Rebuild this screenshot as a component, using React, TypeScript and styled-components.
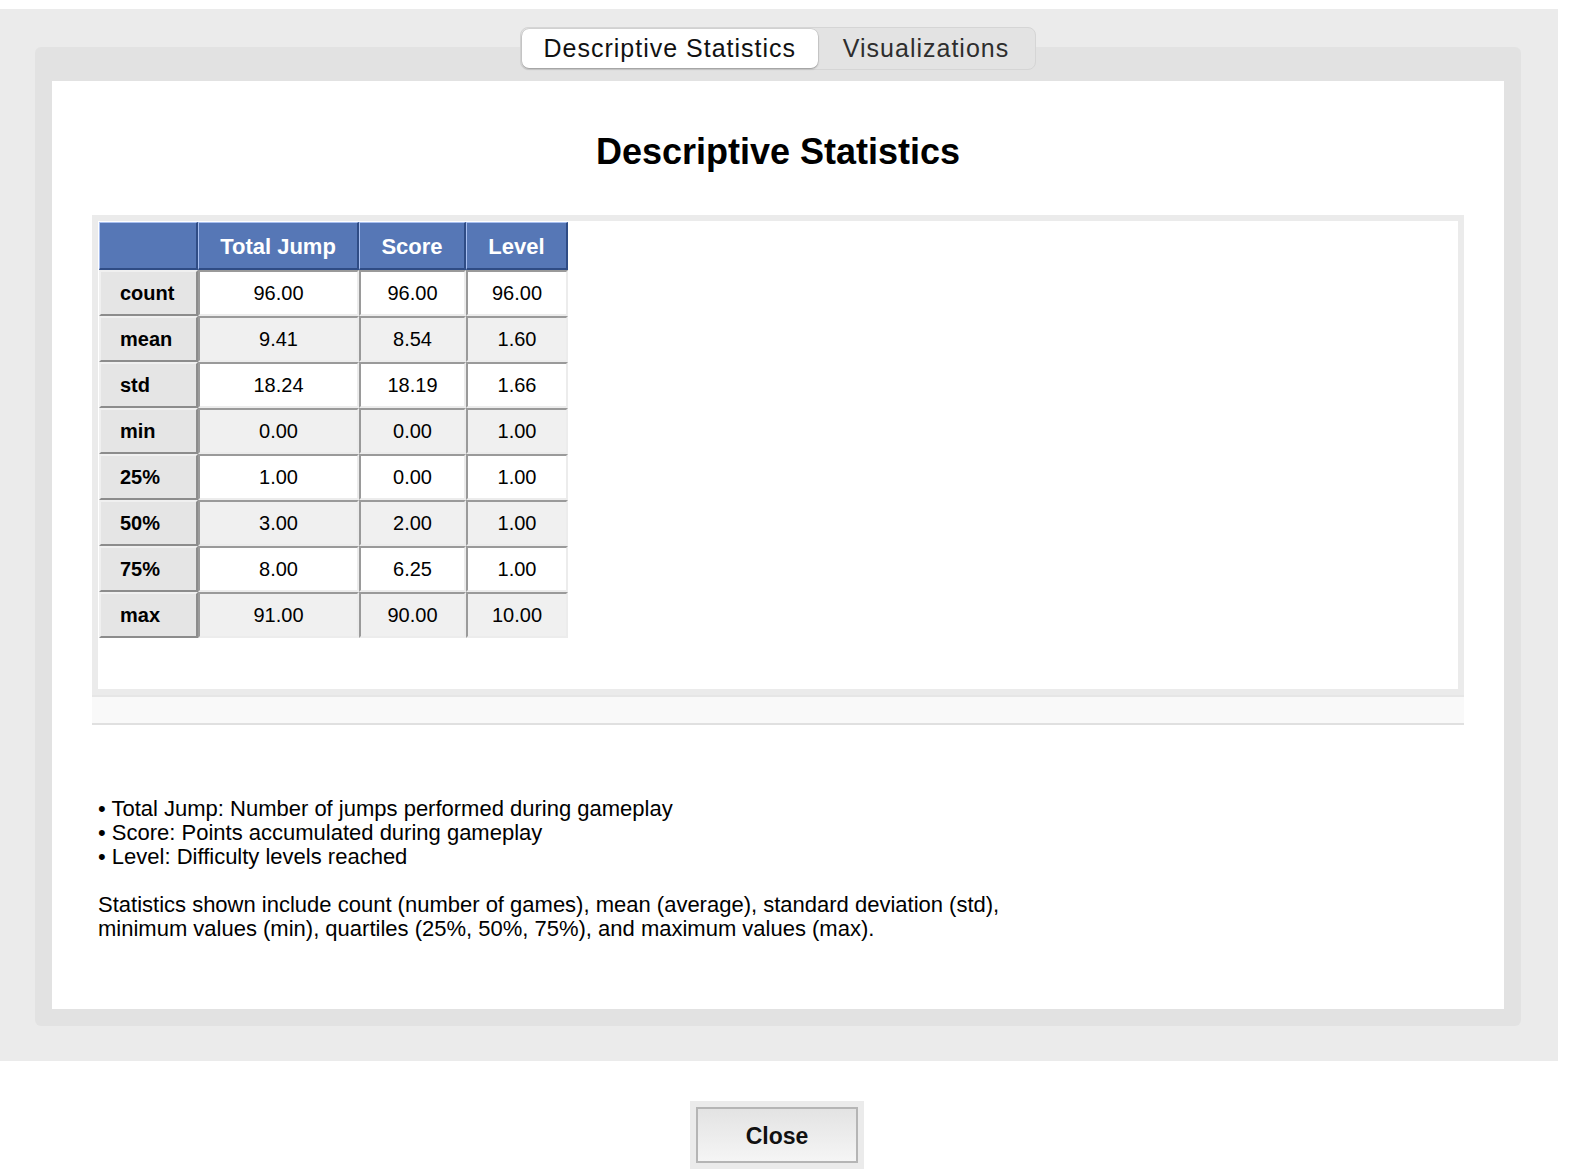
import styled, { createGlobalStyle } from "styled-components";

type Row = {
    label: string;
    values: string[];
}

const COLUMNS = ["Total Jump", "Score", "Level"];

const ROWS: Row[] = [
    { label: "count", values: ["96.00", "96.00", "96.00"] },
    { label: "mean", values: ["9.41", "8.54", "1.60"] },
    { label: "std", values: ["18.24", "18.19", "1.66"] },
    { label: "min", values: ["0.00", "0.00", "1.00"] },
    { label: "25%", values: ["1.00", "0.00", "1.00"] },
    { label: "50%", values: ["3.00", "2.00", "1.00"] },
    { label: "75%", values: ["8.00", "6.25", "1.00"] },
    { label: "max", values: ["91.00", "90.00", "10.00"] },
];

const NOTES = [
    "Total Jump: Number of jumps performed during gameplay",
    "Score: Points accumulated during gameplay",
    "Level: Difficulty levels reached",
];

export default function App() {
    return (
        <>
            <GlobalStyle />
            <Dialog>
                <TabBar>
                    <Tab active>Descriptive Statistics</Tab>
                    <Tab>Visualizations</Tab>
                </TabBar>
                <Pane>
                    <Content>
                        <Heading>Descriptive Statistics</Heading>
                        <Frame>
                            <StatsTable>
                                <colgroup>
                                    <col style={{ width: 99 }} />
                                    <col style={{ width: 161 }} />
                                    <col style={{ width: 107 }} />
                                    <col style={{ width: 102 }} />
                                </colgroup>
                                <thead>
                                    <HeadRow>
                                        <HeadCell />
                                        {COLUMNS.map((c) => (
                                            <HeadCell key={c}>{c}</HeadCell>
                                        ))}
                                    </HeadRow>
                                </thead>
                                <tbody>
                                    {ROWS.map((r, i) => (
                                        <BodyRow key={r.label}>
                                            <IndexCell>{r.label}</IndexCell>
                                            {r.values.map((v, j) => (
                                                <ValueCell key={j} shaded={i % 2 === 1}>{v}</ValueCell>
                                            ))}
                                        </BodyRow>
                                    ))}
                                </tbody>
                            </StatsTable>
                        </Frame>
                        <Strip />
                        <Notes>
                            {NOTES.map((n) => (
                                <Line key={n}>• {n}</Line>
                            ))}
                            <Paragraph>
                                <Line>Statistics shown include count (number of games), mean (average), standard deviation (std),</Line>
                                <Line>minimum values (min), quartiles (25%, 50%, 75%), and maximum values (max).</Line>
                            </Paragraph>
                        </Notes>
                    </Content>
                </Pane>
            </Dialog>
            <Footer>
                <ButtonWell>
                    <CloseButton>Close</CloseButton>
                </ButtonWell>
            </Footer>
        </>
    )
}

const GlobalStyle = createGlobalStyle`
    * {
        box-sizing: border-box;
    }
    html, body {
        margin: 0;
        background: #fff;
    }
    body {
        padding-top: 9px;
        font-family: "Liberation Sans", Arial, sans-serif;
        color: #000;
    }
`
const Dialog = styled.div`
    width: 1558px;
    background: #ebebeb;
    padding: 18px 37px 35px 35px;
    display: flex;
    flex-direction: column;
`
const TabBar = styled.div`
    align-self: center;
    position: relative;
    z-index: 1;
    display: flex;
    height: 43px;
    padding: 1px;
    margin-bottom: -23px;
    background: #e3e3e3;
    border: 1px solid #d5d5d5;
    border-radius: 8px;
`
const Tab = styled.div<{ active?: boolean }>`
    display: flex;
    align-items: center;
    justify-content: center;
    padding: 0 ${({ active }) => (active ? "20px" : "25px")};
    min-width: ${({ active }) => (active ? "296px" : "214px")};
    font-size: 25px;
    letter-spacing: 1px;
    color: ${({ active }) => (active ? "#111" : "#2e2e2e")};
    background: ${({ active }) => (active ? "#fff" : "transparent")};
    border-radius: 7px;
    box-shadow: ${({ active }) => (active ? "0 1px 2px rgba(0,0,0,0.3), 0 0 0 0.5px rgba(0,0,0,0.12)" : "none")};
`
const Pane = styled.div`
    background: #e2e2e2;
    border-radius: 6px;
    padding: 34px 17px 17px 17px;
`
const Content = styled.div`
    background: #fff;
    height: 928px;
    display: flex;
    flex-direction: column;
`
const Heading = styled.h1`
    margin: 50px 0 0 0;
    height: 42px;
    line-height: 42px;
    font-size: 36px;
    font-weight: 700;
    text-align: center;
`
const Frame = styled.div`
    margin: 42px 40px 0 40px;
    height: 480px;
    border: 6px solid #ebebeb;
    background: #fff;
    padding: 1px;
`
const StatsTable = styled.table`
    table-layout: fixed;
    border-collapse: separate;
    border-spacing: 0;
    width: 469px;
`
const HeadRow = styled.tr`
    height: 48px;
`
const HeadCell = styled.th`
    padding: 3px 0 0 0;
    background: #5677b6;
    color: #fff;
    font-size: 22px;
    font-weight: 700;
    text-align: center;
    border-style: solid;
    border-width: 1px 2px 2px 1px;
    border-color: #a8bff0 #2f4c85 #2f4c85 #a8bff0;
`
const BodyRow = styled.tr`
    height: 46px;
`
const IndexCell = styled.th`
    padding: 1px 0 0 19px;
    background: #e5e5e5;
    font-size: 20px;
    font-weight: 700;
    text-align: left;
    border-style: solid;
    border-width: 2px;
    border-color: #f0f0f0 #8c8c8c #8c8c8c #f0f0f0;
`
const ValueCell = styled.td<{ shaded: boolean }>`
    padding: 1px 0 0 0;
    background: ${({ shaded }) => (shaded ? "#f0f0f0" : "#fff")};
    font-size: 20px;
    text-align: center;
    border-style: solid;
    border-width: 2px;
    border-color: #9a9a9a #ececec #ececec #9a9a9a;
`
const Strip = styled.div`
    margin: 0 40px;
    height: 30px;
    background: #f9f9f9;
    border-top: 2px solid #e6e6e6;
    border-bottom: 2px solid #e0e0e0;
`
const Notes = styled.div`
    margin-top: 72px;
    padding-left: 46px;
    font-size: 22px;
    line-height: 24px;
`
const Line = styled.div`
    white-space: nowrap;
`
const Paragraph = styled.div`
    margin-top: 24px;
`
const Footer = styled.div`
    width: 1558px;
    display: flex;
    justify-content: center;
    padding: 40px 4px 0 0;
`
const ButtonWell = styled.div`
    background: #ebebeb;
    padding: 6px;
`
const CloseButton = styled.button`
    width: 162px;
    height: 56px;
    padding-top: 3px;
    border: 2px solid #b5b5b5;
    background: linear-gradient(#e3e3e3, #f5f5f5);
    font-family: "Liberation Sans", Arial, sans-serif;
    font-size: 23px;
    font-weight: 700;
    color: #111;
    cursor: pointer;
`
